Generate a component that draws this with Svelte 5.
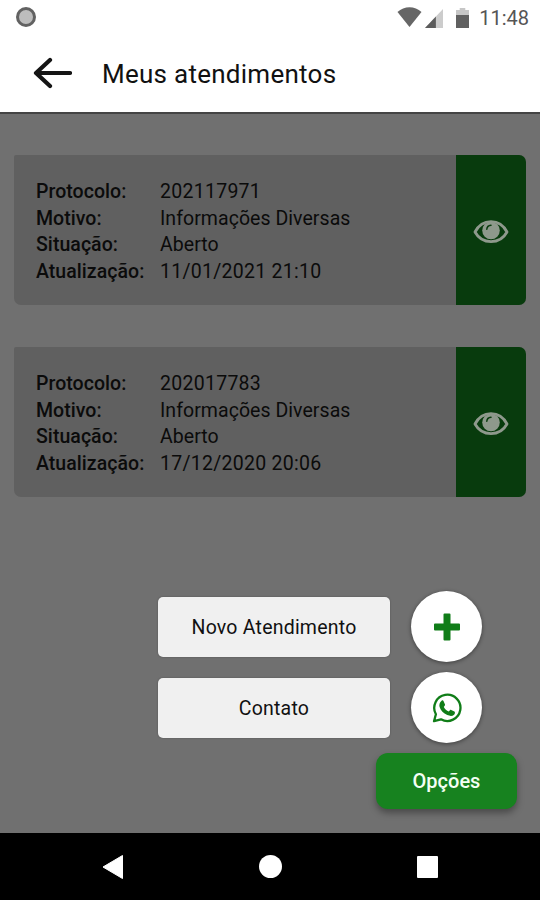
<script>
  // service requests of the logged user
  const tickets = [
    {
      protocol: "202117971",
      reason: "Informações Diversas",
      status: "Aberto",
      updated: "11/01/2021 21:10",
    },
    {
      protocol: "202017783",
      reason: "Informações Diversas",
      status: "Aberto",
      updated: "17/12/2020 20:06",
    },
  ];

  let isOpen = $state(true);

  const toggle = () => {
    isOpen = !isOpen;
  };
</script>

<div class="screen">
  <div class="status-bar">
    <span class="recording"></span>
    <div class="status-icons">
      <svg class="wifi" width="25" height="20" viewBox="0 0 26 20" preserveAspectRatio="none">
        <path d="M.5 5C7.500-1.300 18.500-1.300 25.500 5L13 20z" fill="#666" />
      </svg>
      <svg class="signal" width="18" height="19" viewBox="0 0 19 19" preserveAspectRatio="none">
        <path d="M19 0v19H0z" fill="#ccc" />
        <path d="M11.5 7.5V19H0z" fill="#5c5c5c" />
      </svg>
      <svg class="battery" width="13" height="20" viewBox="0 0 14 20" preserveAspectRatio="none">
        <path d="M4 0h6v2h4v6H0V2h4z" fill="#c6c6c6" />
        <path d="M0 7h14v13H0z" fill="#606060" />
      </svg>
      <span class="clock">11:48</span>
    </div>
  </div>

  <header class="toolbar">
    <button class="back" aria-label="Voltar">
      <svg width="40" height="32" viewBox="0 0 40 32">
        <path
          d="M18 3L4 16l14 13M5 16h33"
          fill="none"
          stroke="#151515"
          stroke-width="4.200"
          stroke-linecap="round"
          stroke-linejoin="round"
        />
      </svg>
    </button>
    <h1>Meus atendimentos</h1>
  </header>

  <main>
    {#each tickets as ticket}
      <div class="card">
        <dl>
          <dt>Protocolo:</dt>
          <dd class="number">{ticket.protocol}</dd>
          <dt>Motivo:</dt>
          <dd>{ticket.reason}</dd>
          <dt>Situação:</dt>
          <dd>{ticket.status}</dd>
          <dt>Atualização:</dt>
          <dd class="number">{ticket.updated}</dd>
        </dl>
        <button class="view" aria-label="Visualizar">
          <svg width="36" height="26" viewBox="0 0 36 26">
            <path
              d="M2 13C9-.9 27-.9 34 13 27 25.800 9 25.800 2 13z"
              fill="none"
              stroke="#8e998c"
              stroke-width="2.800"
              stroke-linejoin="round"
            />
            <circle cx="18" cy="11.500" r="8.800" fill="#8e998c" />
            <path
              d="M13.800 10.300c.2-2.500 1.800-3.800 4.200-4"
              fill="none"
              stroke="#083b0d"
              stroke-width="1.500"
              stroke-linecap="round"
            />
          </svg>
        </button>
      </div>
    {/each}

    <div class="fab-menu">
      {#if isOpen}
        <div class="action">
          <button class="label">Novo Atendimento</button>
          <button class="round" aria-label="Novo Atendimento">
            <svg width="28" height="28" viewBox="0 0 28 28">
              <path
                d="M11.500.5h5q1 0 1 1v9H26q1 0 1 1v5q0 1-1 1h-8.500v9q0 1-1 1h-5q-1 0-1-1v-9H2q-1 0-1-1v-5q0-1 1-1h8.500v-9q0-1 1-1z"
                fill="#107d18"
              />
            </svg>
          </button>
        </div>
        <div class="action">
          <button class="label">Contato</button>
          <button class="round" aria-label="Contato">
            <svg width="30" height="30" viewBox="0 0 30 30">
              <path
                d="M2 28.200l1.900-7A13.100 13.100 0 1 1 9 26.300z"
                fill="none"
                stroke="#107d18"
                stroke-width="2.300"
                stroke-linejoin="round"
              />
              <path
                d="M9.600 7.700c.6-.5 1.500-.5 1.900.3l1.500 3.500c.2.700-.2 1.200-1.200 2.400 1.100 2.100 2.700 3.600 5 4.600 1.300-1.600 1.700-1.900 2.400-1.600l3.200 1.600c.9.500.6 2.300-.3 3.200-1.700 1.600-4 1.500-6.800.4-3.900-1.600-6.600-4.600-7.700-8-.7-2.600.2-4.800 2-6.400z"
                fill="#107d18"
              />
            </svg>
          </button>
        </div>
      {/if}
      <button class="options" onclick={toggle}>Opções</button>
    </div>
  </main>

  <nav>
    <svg width="22" height="26" viewBox="0 0 22 26">
      <path d="M1 13L20.500 1.500v23z" fill="#fff" stroke="#fff" />
    </svg>
    <span class="home"></span>
    <span class="recent"></span>
  </nav>
</div>

<style>
  :global(body) {
    margin: 0;
  }

  .screen {
    display: flex;
    flex-direction: column;
    width: 540px;
    height: 900px;
    overflow: hidden;
    background: #707070;
    font-family: Roboto, sans-serif;
    color: #111;
  }

  button {
    display: flex;
    align-items: center;
    justify-content: center;
    padding: 0;
    border: 0;
    background: none;
    font: inherit;
    color: inherit;
    cursor: pointer;
  }

  /* status bar */
  .status-bar {
    display: flex;
    justify-content: space-between;
    align-items: center;
    height: 36px;
    padding: 0 11px 0 16px;
    background: #fff;
  }

  .recording {
    box-sizing: border-box;
    width: 20px;
    height: 20px;
    margin-bottom: 2px;
    border: 3px solid #626262;
    border-radius: 50%;
    background: #bdbdbd;
  }

  .status-icons {
    display: flex;
    align-items: center;
  }

  .wifi {
    margin-bottom: 2px;
  }

  .signal {
    margin-left: 3px;
  }

  .battery {
    margin-left: 13px;
    margin-bottom: 1px;
  }

  .clock {
    margin-left: 10px;
    font-size: 20px;
    line-height: 36px;
    color: #555;
  }

  /* toolbar */
  .toolbar {
    display: flex;
    align-items: center;
    box-sizing: border-box;
    height: 78px;
    padding: 0 0 1px 32px;
    border-bottom: 2px solid #444;
    background: #fff;
  }

  .back {
    margin-bottom: 2px;
  }

  h1 {
    margin: 1px 0 0 30px;
    font-size: 26px;
    font-weight: 400;
    letter-spacing: 0.26px;
  }

  /* cards */
  main {
    flex: 1;
    display: flex;
    flex-direction: column;
    gap: 42px;
    padding: 41px 14px 0;
  }

  .card {
    display: flex;
    height: 150px;
    border-radius: 2px 7px 7px 7px;
    overflow: hidden;
    background: #606060;
  }

  dl {
    flex: 1;
    display: grid;
    grid-template-columns: 124px 1fr;
    grid-auto-rows: 26.7px;
    margin: 0;
    padding: 24px 0 0 22px;
    font-size: 19.5px;
    line-height: 26.7px;
    letter-spacing: 0.05px;
    color: #0b0b0b;
  }

  dt {
    font-weight: 500;
    white-space: nowrap;
  }

  dd {
    margin: 0;
    white-space: nowrap;
  }

  .number {
    letter-spacing: 0.27px;
  }

  .view {
    width: 70px;
    padding-top: 3px;
    background: #083b0d;
  }

  /* floating options */
  .fab-menu {
    display: flex;
    flex-direction: column;
    align-items: flex-end;
    gap: 10px;
    margin-top: 52px;
  }

  .action {
    display: flex;
    align-items: center;
    gap: 21px;
    margin-right: 44px;
  }

  .label {
    width: 232px;
    height: 60px;
    padding-top: 2px;
    border-radius: 5px;
    background: #f0f0f0;
    box-shadow: 0 0 2px rgba(0, 0, 0, 0.3);
    font-size: 19.5px;
    letter-spacing: 0.22px;
  }

  .round {
    width: 71px;
    height: 71px;
    border-radius: 50%;
    background: #fff;
    box-shadow: 0 1px 4px rgba(0, 0, 0, 0.45);
  }

  .options {
    width: 141px;
    height: 56px;
    margin-right: 9px;
    border-radius: 12px;
    background: #17821f;
    box-shadow: 0 4px 7px rgba(0, 0, 0, 0.35);
    font-size: 20px;
    font-weight: 500;
    color: #f4fff4;
  }

  /* android navigation */
  nav {
    display: flex;
    justify-content: space-between;
    align-items: center;
    height: 67px;
    padding: 0 102px;
    background: #000;
  }

  .home {
    width: 23px;
    height: 23px;
    border-radius: 50%;
    background: #fff;
  }

  .recent {
    width: 21px;
    height: 22px;
    border-radius: 1px;
    background: #fff;
  }
</style>
